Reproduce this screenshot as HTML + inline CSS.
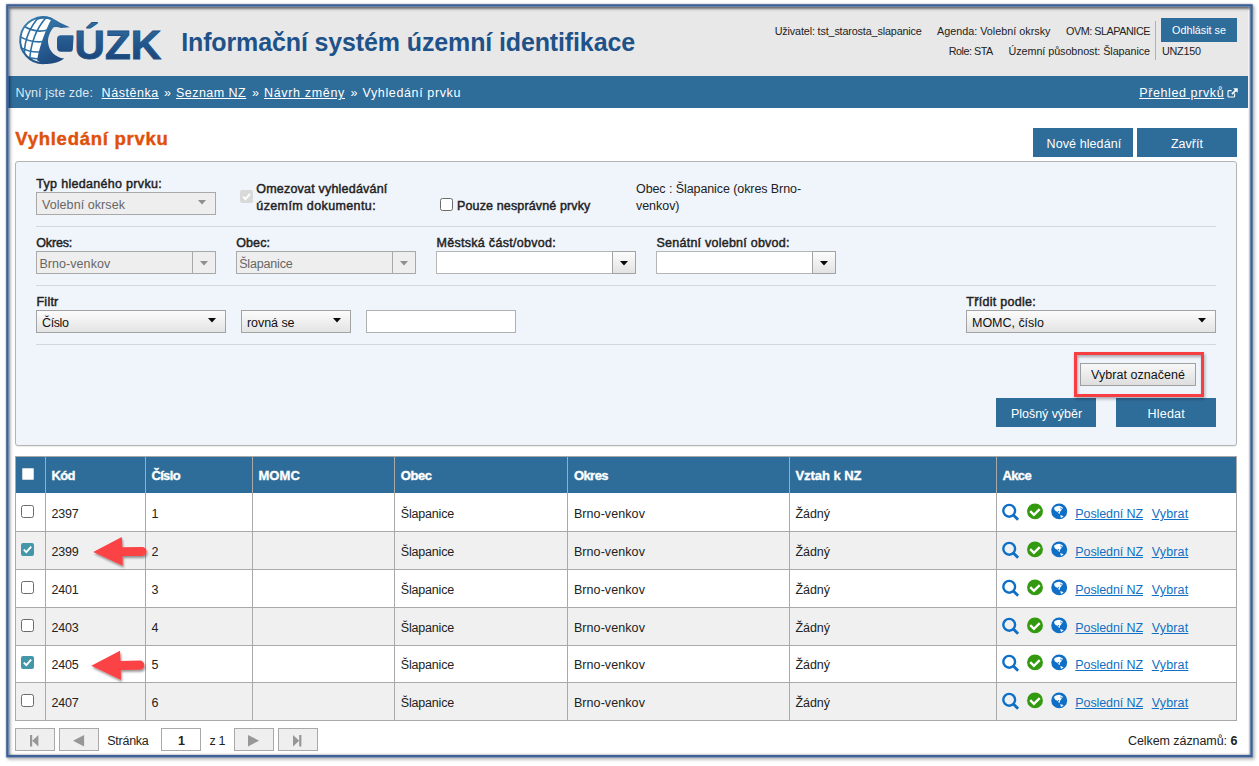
<!DOCTYPE html>
<html lang="cs"><head><meta charset="utf-8"><title>Informační systém územní identifikace – Vyhledání prvku</title>
<style>
html,body{margin:0;padding:0;background:#fff;}
body{width:1259px;height:766px;overflow:hidden;position:relative;font-family:'Liberation Sans', sans-serif;}
#frame{position:absolute;left:0;top:0;z-index:9;pointer-events:none}
#ish{position:absolute;left:8.6px;top:6.6px;width:1241.6px;height:748.6px;box-shadow:inset 0 0 2.5px rgba(0,0,0,.22), inset 0 2px 2px rgba(0,0,0,.28);z-index:8;pointer-events:none}
#c div{position:absolute}
.t{position:absolute;white-space:pre;font-family:'Liberation Sans', sans-serif;}
</style></head>
<body>
<div id="c">
<div style="left:8px;top:6px;width:1240px;height:70px;background:#e8e8e8"></div>
<div style="left:8px;top:76px;width:1240px;height:32px;background:#2e6c99"></div>
<div style="left:1155px;top:21px;width:1px;height:39px;background:#9db5cc"></div>
<div style="left:1161px;top:18px;width:76px;height:24px;background:#2e6c99"></div>
<div style="left:1033px;top:128px;width:100px;height:29px;background:#2e6c99"></div>
<div style="left:1137px;top:128px;width:100px;height:29px;background:#2e6c99"></div>
<div style="left:15px;top:161px;width:1222px;height:285px;background:#f0f4fb;border:1px solid #b4b4b4;border-radius:3px;box-sizing:border-box;box-shadow:0 1px 1px rgba(0,0,0,.08)"></div>
<div style="left:36px;top:226px;width:1180px;height:1px;background:#d4d8de"></div>
<div style="left:36px;top:285px;width:1180px;height:1px;background:#d4d8de"></div>
<div style="left:36px;top:344px;width:1180px;height:1px;background:#d4d8de"></div>
<div style="left:36px;top:192px;width:180px;height:23px;background:#eeeeee;border:1px solid #a9a9a9;box-sizing:border-box"></div>
<svg style="position:absolute;left:198.4px;top:200.3px" width="8" height="5" viewBox="0 0 8 5"><path d="M0 0H8L4.0 4.6Z" fill="#8f8f8f"/></svg>
<div style="left:36px;top:251px;width:157px;height:23px;background:#eeeeee;border:1px solid #a9a9a9;box-sizing:border-box"></div>
<div style="left:192px;top:251px;width:24px;height:23px;background:#eeeeee;border:1px solid #a9a9a9;box-sizing:border-box"></div>
<svg style="position:absolute;left:200.0px;top:261.0px" width="8" height="5" viewBox="0 0 8 5"><path d="M0 0H8L4.0 4.6Z" fill="#8f8f8f"/></svg>
<div style="left:236px;top:251px;width:157px;height:23px;background:#eeeeee;border:1px solid #a9a9a9;box-sizing:border-box"></div>
<div style="left:392px;top:251px;width:24px;height:23px;background:#eeeeee;border:1px solid #a9a9a9;box-sizing:border-box"></div>
<svg style="position:absolute;left:400.0px;top:261.0px" width="8" height="5" viewBox="0 0 8 5"><path d="M0 0H8L4.0 4.6Z" fill="#8f8f8f"/></svg>
<div style="left:436px;top:251px;width:177px;height:23px;background:#fff;border:1px solid #b5b5b5;box-sizing:border-box"></div>
<div style="left:612px;top:251px;width:24px;height:23px;background:linear-gradient(#fcfcfc,#e3e3e3);border:1px solid #a3a3a3;box-sizing:border-box"></div>
<svg style="position:absolute;left:620.0px;top:261.0px" width="8" height="5" viewBox="0 0 8 5"><path d="M0 0H8L4.0 4.6Z" fill="#0a0a0a"/></svg>
<div style="left:656px;top:251px;width:157px;height:23px;background:#fff;border:1px solid #b5b5b5;box-sizing:border-box"></div>
<div style="left:812px;top:251px;width:24px;height:23px;background:linear-gradient(#fcfcfc,#e3e3e3);border:1px solid #a3a3a3;box-sizing:border-box"></div>
<svg style="position:absolute;left:820.0px;top:261.0px" width="8" height="5" viewBox="0 0 8 5"><path d="M0 0H8L4.0 4.6Z" fill="#0a0a0a"/></svg>
<div style="left:36px;top:310px;width:190px;height:23px;background:linear-gradient(#fcfcfc,#e3e3e3);border:1px solid #a3a3a3;box-sizing:border-box"></div>
<svg style="position:absolute;left:208.4px;top:318.3px" width="8" height="5" viewBox="0 0 8 5"><path d="M0 0H8L4.0 4.6Z" fill="#0a0a0a"/></svg>
<div style="left:241px;top:310px;width:110px;height:23px;background:linear-gradient(#fcfcfc,#e3e3e3);border:1px solid #a3a3a3;box-sizing:border-box"></div>
<svg style="position:absolute;left:333.4px;top:318.3px" width="8" height="5" viewBox="0 0 8 5"><path d="M0 0H8L4.0 4.6Z" fill="#0a0a0a"/></svg>
<div style="left:366px;top:310px;width:150px;height:23px;background:#fff;border:1px solid #b0b0b0;box-sizing:border-box"></div>
<div style="left:966px;top:310px;width:250px;height:23px;background:linear-gradient(#fcfcfc,#e3e3e3);border:1px solid #a3a3a3;box-sizing:border-box"></div>
<svg style="position:absolute;left:1198.4px;top:318.3px" width="8" height="5" viewBox="0 0 8 5"><path d="M0 0H8L4.0 4.6Z" fill="#0a0a0a"/></svg>
<div style="left:240px;top:190px;width:13px;height:13px;background:#d9d9d9;border-radius:2px"><svg width="13" height="13" viewBox="0 0 13 13" style="position:absolute;left:0;top:0"><path d="M3 6.7L5.4 9.2L10 3.8" fill="none" stroke="#fff" stroke-width="1.8"/></svg></div>
<div style="left:439.6px;top:198px;width:13px;height:13px;background:#fff;border:1px solid #6b6b6b;border-radius:2.5px;box-sizing:border-box"></div>
<div style="left:1074px;top:352px;width:130px;height:45px;border:3px solid #f73e42;box-sizing:border-box;box-shadow:1px 2px 3px rgba(0,0,0,.3), inset 1px 2px 3px rgba(0,0,0,.3);z-index:3"></div>
<div style="left:1080px;top:363px;width:116px;height:23px;background:linear-gradient(#f8f8f8,#dedede);border:1px solid #a0a0a0;box-sizing:border-box"></div>
<div style="left:996px;top:398px;width:100px;height:29px;background:#2e6c99"></div>
<div style="left:1116px;top:398px;width:100px;height:29px;background:#2e6c99"></div>
<div style="left:15px;top:456px;width:1222px;height:37px;background:#2e6c99"></div>
<div style="left:15px;top:493px;width:1222px;height:39px;background:#fff"></div>
<div style="left:15px;top:532px;width:1222px;height:38px;background:#f0f0f0"></div>
<div style="left:15px;top:570px;width:1222px;height:38px;background:#fff"></div>
<div style="left:15px;top:608px;width:1222px;height:38px;background:#f0f0f0"></div>
<div style="left:15px;top:646px;width:1222px;height:36px;background:#fff"></div>
<div style="left:15px;top:682px;width:1222px;height:38px;background:#f0f0f0"></div>
<svg style="position:absolute;left:0;top:0" width="1259" height="766" viewBox="0 0 1259 766"><rect x="15" y="531.00" width="1222" height="1" fill="#a9a9a9"/><rect x="15" y="569.00" width="1222" height="1" fill="#a9a9a9"/><rect x="15" y="607.00" width="1222" height="1" fill="#a9a9a9"/><rect x="15" y="645.00" width="1222" height="1" fill="#a9a9a9"/><rect x="15" y="682.00" width="1222" height="1" fill="#a9a9a9"/><rect x="15" y="720.00" width="1222" height="1" fill="#a9a9a9"/><rect x="15" y="456" width="1222" height="1" fill="#a9a9a9"/><rect x="15" y="456" width="1" height="265.00" fill="#a9a9a9"/><rect x="1236" y="456" width="1" height="265.00" fill="#a9a9a9"/><rect x="45" y="457" width="1" height="263.00" fill="#a9a9a9"/><rect x="145" y="457" width="1" height="263.00" fill="#a9a9a9"/><rect x="252" y="457" width="1" height="263.00" fill="#a9a9a9"/><rect x="394" y="457" width="1" height="263.00" fill="#a9a9a9"/><rect x="567" y="457" width="1" height="263.00" fill="#a9a9a9"/><rect x="789" y="457" width="1" height="263.00" fill="#a9a9a9"/><rect x="996" y="457" width="1" height="263.00" fill="#a9a9a9"/></svg>
<div style="left:21.5px;top:467.5px;width:12.5px;height:12.5px;background:#fff;border-radius:2px;box-shadow:inset 0 0 0 1px #cfd8e0"></div>
<div style="left:21px;top:505px;width:13px;height:13px;background:#fff;border:1px solid #6b6b6b;border-radius:2.5px;box-sizing:border-box"></div>
<div style="left:21px;top:543px;width:13px;height:13px;background:#4496a9;border-radius:2px"><svg width="13" height="13" viewBox="0 0 13 13" style="position:absolute;left:0;top:0"><path d="M2.8 6.6L5.3 9.2L10.2 3.6" fill="none" stroke="#fff" stroke-width="1.9"/></svg></div>
<div style="left:21px;top:581px;width:13px;height:13px;background:#fff;border:1px solid #6b6b6b;border-radius:2.5px;box-sizing:border-box"></div>
<div style="left:21px;top:619px;width:13px;height:13px;background:#fff;border:1px solid #6b6b6b;border-radius:2.5px;box-sizing:border-box"></div>
<div style="left:21px;top:656px;width:13px;height:13px;background:#4496a9;border-radius:2px"><svg width="13" height="13" viewBox="0 0 13 13" style="position:absolute;left:0;top:0"><path d="M2.8 6.6L5.3 9.2L10.2 3.6" fill="none" stroke="#fff" stroke-width="1.9"/></svg></div>
<div style="left:21px;top:694px;width:13px;height:13px;background:#fff;border:1px solid #6b6b6b;border-radius:2.5px;box-sizing:border-box"></div>
<svg style="position:absolute;left:998px;top:499.95px" width="74" height="24" viewBox="0 0 74 24"><circle cx="11.2" cy="10.8" r="5.9" fill="none" stroke="#0f6fc6" stroke-width="2.4"/><path d="M15.3 14.9L20.1 19.7" stroke="#0f6fc6" stroke-width="2.8"/><circle cx="37" cy="11.4" r="7.9" fill="#33990f"/><path d="M32.2 11.1L35.9 14.8L41.7 9.2" fill="none" stroke="#fff" stroke-width="2.4"/><circle cx="61.2" cy="11.4" r="7.95" fill="#0f6fc6"/><path d="M56.1 7.7L57.9 6.4L61 5.8L63.2 6.6L65.2 8L63.9 8.9L63.3 10.3L61.9 12.1L61.7 13.9L60.6 13.4L59.4 11.7L57.6 11.1L56.4 9.5Z" fill="#fff"/><path d="M62.3 14.9L65.6 16.3L63 18Z" fill="#fff"/><path d="M62.2 7.2L64 8.6L62.8 9.2Z" fill="#0f6fc6"/><circle cx="60.5" cy="11.7" r="0.7" fill="#0f6fc6"/></svg>
<svg style="position:absolute;left:998px;top:537.95px" width="74" height="24" viewBox="0 0 74 24"><circle cx="11.2" cy="10.8" r="5.9" fill="none" stroke="#0f6fc6" stroke-width="2.4"/><path d="M15.3 14.9L20.1 19.7" stroke="#0f6fc6" stroke-width="2.8"/><circle cx="37" cy="11.4" r="7.9" fill="#33990f"/><path d="M32.2 11.1L35.9 14.8L41.7 9.2" fill="none" stroke="#fff" stroke-width="2.4"/><circle cx="61.2" cy="11.4" r="7.95" fill="#0f6fc6"/><path d="M56.1 7.7L57.9 6.4L61 5.8L63.2 6.6L65.2 8L63.9 8.9L63.3 10.3L61.9 12.1L61.7 13.9L60.6 13.4L59.4 11.7L57.6 11.1L56.4 9.5Z" fill="#fff"/><path d="M62.3 14.9L65.6 16.3L63 18Z" fill="#fff"/><path d="M62.2 7.2L64 8.6L62.8 9.2Z" fill="#0f6fc6"/><circle cx="60.5" cy="11.7" r="0.7" fill="#0f6fc6"/></svg>
<svg style="position:absolute;left:998px;top:575.95px" width="74" height="24" viewBox="0 0 74 24"><circle cx="11.2" cy="10.8" r="5.9" fill="none" stroke="#0f6fc6" stroke-width="2.4"/><path d="M15.3 14.9L20.1 19.7" stroke="#0f6fc6" stroke-width="2.8"/><circle cx="37" cy="11.4" r="7.9" fill="#33990f"/><path d="M32.2 11.1L35.9 14.8L41.7 9.2" fill="none" stroke="#fff" stroke-width="2.4"/><circle cx="61.2" cy="11.4" r="7.95" fill="#0f6fc6"/><path d="M56.1 7.7L57.9 6.4L61 5.8L63.2 6.6L65.2 8L63.9 8.9L63.3 10.3L61.9 12.1L61.7 13.9L60.6 13.4L59.4 11.7L57.6 11.1L56.4 9.5Z" fill="#fff"/><path d="M62.3 14.9L65.6 16.3L63 18Z" fill="#fff"/><path d="M62.2 7.2L64 8.6L62.8 9.2Z" fill="#0f6fc6"/><circle cx="60.5" cy="11.7" r="0.7" fill="#0f6fc6"/></svg>
<svg style="position:absolute;left:998px;top:613.95px" width="74" height="24" viewBox="0 0 74 24"><circle cx="11.2" cy="10.8" r="5.9" fill="none" stroke="#0f6fc6" stroke-width="2.4"/><path d="M15.3 14.9L20.1 19.7" stroke="#0f6fc6" stroke-width="2.8"/><circle cx="37" cy="11.4" r="7.9" fill="#33990f"/><path d="M32.2 11.1L35.9 14.8L41.7 9.2" fill="none" stroke="#fff" stroke-width="2.4"/><circle cx="61.2" cy="11.4" r="7.95" fill="#0f6fc6"/><path d="M56.1 7.7L57.9 6.4L61 5.8L63.2 6.6L65.2 8L63.9 8.9L63.3 10.3L61.9 12.1L61.7 13.9L60.6 13.4L59.4 11.7L57.6 11.1L56.4 9.5Z" fill="#fff"/><path d="M62.3 14.9L65.6 16.3L63 18Z" fill="#fff"/><path d="M62.2 7.2L64 8.6L62.8 9.2Z" fill="#0f6fc6"/><circle cx="60.5" cy="11.7" r="0.7" fill="#0f6fc6"/></svg>
<svg style="position:absolute;left:998px;top:650.95px" width="74" height="24" viewBox="0 0 74 24"><circle cx="11.2" cy="10.8" r="5.9" fill="none" stroke="#0f6fc6" stroke-width="2.4"/><path d="M15.3 14.9L20.1 19.7" stroke="#0f6fc6" stroke-width="2.8"/><circle cx="37" cy="11.4" r="7.9" fill="#33990f"/><path d="M32.2 11.1L35.9 14.8L41.7 9.2" fill="none" stroke="#fff" stroke-width="2.4"/><circle cx="61.2" cy="11.4" r="7.95" fill="#0f6fc6"/><path d="M56.1 7.7L57.9 6.4L61 5.8L63.2 6.6L65.2 8L63.9 8.9L63.3 10.3L61.9 12.1L61.7 13.9L60.6 13.4L59.4 11.7L57.6 11.1L56.4 9.5Z" fill="#fff"/><path d="M62.3 14.9L65.6 16.3L63 18Z" fill="#fff"/><path d="M62.2 7.2L64 8.6L62.8 9.2Z" fill="#0f6fc6"/><circle cx="60.5" cy="11.7" r="0.7" fill="#0f6fc6"/></svg>
<svg style="position:absolute;left:998px;top:688.95px" width="74" height="24" viewBox="0 0 74 24"><circle cx="11.2" cy="10.8" r="5.9" fill="none" stroke="#0f6fc6" stroke-width="2.4"/><path d="M15.3 14.9L20.1 19.7" stroke="#0f6fc6" stroke-width="2.8"/><circle cx="37" cy="11.4" r="7.9" fill="#33990f"/><path d="M32.2 11.1L35.9 14.8L41.7 9.2" fill="none" stroke="#fff" stroke-width="2.4"/><circle cx="61.2" cy="11.4" r="7.95" fill="#0f6fc6"/><path d="M56.1 7.7L57.9 6.4L61 5.8L63.2 6.6L65.2 8L63.9 8.9L63.3 10.3L61.9 12.1L61.7 13.9L60.6 13.4L59.4 11.7L57.6 11.1L56.4 9.5Z" fill="#fff"/><path d="M62.3 14.9L65.6 16.3L63 18Z" fill="#fff"/><path d="M62.2 7.2L64 8.6L62.8 9.2Z" fill="#0f6fc6"/><circle cx="60.5" cy="11.7" r="0.7" fill="#0f6fc6"/></svg>
<svg style="position:absolute;left:0;top:0;z-index:5" width="1259" height="766" viewBox="0 0 1259 766"><defs><filter id="sh" x="-20%" y="-20%" width="140%" height="150%"><feDropShadow dx="1" dy="2" stdDeviation="1.2" flood-color="#000" flood-opacity="0.4"/></filter></defs><path d="M93.2 552L121.8 537L122.39999999999999 547.1999999999999L142.1 546.9A4.5 4.5 0 0 1 142.1 555.9L122.6 556.1L122.8 565.7Z" fill="#fb4245" filter="url(#sh)"/><path d="M91.3 665.7L120 650.7L120.6 660.9L139.80000000000004 660.6A4.599999999999966 4.599999999999966 0 0 1 139.80000000000004 669.8L120.8 670.0L121 680Z" fill="#fb4245" filter="url(#sh)"/></svg>
<div style="left:15px;top:728px;width:40px;height:23px;background:#efefef;border:1px solid #a9a9a9;box-sizing:border-box"><svg width="12" height="12" viewBox="0 0 12 12" style="position:absolute;left:14.4px;top:5.7px"><path d="M0 0H2.2V11.4H0ZM8.4 0V11.4L2.2 5.7Z" fill="#979797"/></svg></div>
<div style="left:59px;top:728px;width:40px;height:23px;background:#efefef;border:1px solid #a9a9a9;box-sizing:border-box"><svg width="12" height="12" viewBox="0 0 12 12" style="position:absolute;left:13.0px;top:5.7px"><path d="M11.1 0V11.4L0 5.7Z" fill="#979797"/></svg></div>
<div style="left:234px;top:728px;width:40px;height:23px;background:#efefef;border:1px solid #a9a9a9;box-sizing:border-box"><svg width="12" height="12" viewBox="0 0 12 12" style="position:absolute;left:13.0px;top:5.7px"><path d="M0 0V11.4L11.1 5.7Z" fill="#979797"/></svg></div>
<div style="left:278px;top:728px;width:40px;height:23px;background:#efefef;border:1px solid #a9a9a9;box-sizing:border-box"><svg width="12" height="12" viewBox="0 0 12 12" style="position:absolute;left:14.4px;top:5.7px"><path d="M6.2 0H8.4V11.4H6.2ZM0 0V11.4L6.2 5.7Z" fill="#979797"/></svg></div>
<div style="left:161px;top:728px;width:40px;height:23px;background:#fff;border:1px solid #a9a9a9;box-sizing:border-box"></div>
<svg style="position:absolute;left:1227.4px;top:87.5px" width="11" height="10" viewBox="0 0 11 10"><path d="M7.6 5.6V8.2A0.8 0.8 0 0 1 6.8 9H1.8A0.8 0.8 0 0 1 1 8.2V3.4A0.8 0.8 0 0 1 1.8 2.6H4.6" fill="none" stroke="#fff" stroke-width="1.1"/><path d="M6.2 0.3H10.7V4.8L9.1 3.2L5.6 6.7L4.3 5.4L7.8 1.9Z" fill="#fff"/></svg>
<svg style="position:absolute;left:10px;top:8px" width="160" height="64" viewBox="10 8 160 64">
<defs>
<linearGradient id="lg1" gradientUnits="userSpaceOnUse" x1="30" y1="16" x2="56" y2="64"><stop offset="0" stop-color="#3c82b2"/><stop offset="1" stop-color="#1c477d"/></linearGradient>
<linearGradient id="lg2" gradientUnits="userSpaceOnUse" x1="0" y1="24" x2="0" y2="60"><stop offset="0" stop-color="#2f6da0"/><stop offset="1" stop-color="#1b447a"/></linearGradient>
<clipPath id="gc"><circle cx="42.9" cy="40.1" r="23.2"/></clipPath>
<clipPath id="lit"><path d="M52.6 17C46 29 40.5 45 37.3 61L10 64V8Z"/></clipPath>
</defs>
<g clip-path="url(#gc)"><g clip-path="url(#lit)">
<rect x="10" y="8" width="60" height="64" fill="#fff"/>
<g fill="none" stroke="#2f70a4" stroke-width="1.6">
<path d="M47.5 16C37 27 30 42 29.5 64"/>
<path d="M40 16C29.5 27 23.5 40 24.5 58"/>
<path d="M23 25.5C31 31 42 33 53 28"/>
<path d="M18 35.5C28 41.5 38 43.5 48 40.5"/>
<path d="M18 46C27 51.5 35 53 44 51.5"/>
<path d="M22 55.5C29 58.5 34 59.5 41 58.5"/>
</g></g></g>
<path d="M45.3 63.1A23 23 0 1 1 51.9 18.9" fill="none" stroke="url(#lg1)" stroke-width="2"/>
<path d="M36 17.8Q44 14.6 52.3 18.2L51 20Q44 17.6 37 20Z" fill="#2f70a4"/>
<path d="M52 18.1Q60.5 23.6 69.9 27.3L61 27.9Q57 26.4 53.6 27.2C49.6 32 47.4 38 48.2 43.5C49.2 51 55 57.6 64.3 58.6Q56 64.6 45 63.9Q40 63 37 60.2C40 45 45.5 30 52 18.1Z" fill="url(#lg1)"/>
<path d="M61.2 35.3H72.3Q73.7 35.3 73.6 36.7L72.8 49.4Q72.6 51.7 70.4 51.7H61.2Q57 51.7 57 47.5V39.5Q57 35.3 61.2 35.3Z" fill="url(#lg2)"/>
<text x="74.6" y="59" font-family="'Liberation Sans',sans-serif" font-weight="700" font-size="41.4" fill="url(#lg2)" stroke="#235489" stroke-width="1" textLength="86.5" lengthAdjust="spacingAndGlyphs">ÚZK</text>
</svg>

<span class="t" style="left:181.2px;top:25.5px;font-size:25px;line-height:33px;color:#1f5288;letter-spacing:-0.127px;font-weight:700;">Informační systém územní identifikace</span>
<span class="t" style="left:774.7px;top:24.0px;font-size:10.8px;line-height:14px;color:#222;letter-spacing:-0.151px;">Uživatel: tst_starosta_slapanice</span>
<span class="t" style="left:937.0px;top:24.0px;font-size:10.8px;line-height:14px;color:#222;letter-spacing:0.002px;">Agenda: Volební okrsky</span>
<span class="t" style="left:1066.0px;top:24.0px;font-size:10.8px;line-height:14px;color:#222;letter-spacing:-0.458px;">OVM: SLAPANICE</span>
<span class="t" style="left:948.7px;top:44.0px;font-size:10.8px;line-height:14px;color:#222;letter-spacing:-0.490px;">Role: STA</span>
<span class="t" style="left:1008.5px;top:44.0px;font-size:10.8px;line-height:14px;color:#222;letter-spacing:-0.072px;">Územní působnost: Šlapanice</span>
<span class="t" style="left:1172.0px;top:23.0px;font-size:10.8px;line-height:14px;color:#fff;letter-spacing:-0.001px;">Odhlásit se</span>
<span class="t" style="left:1162.0px;top:44.0px;font-size:10.8px;line-height:14px;color:#222;letter-spacing:-0.236px;">UNZ150</span>
<span class="t" style="left:15.5px;top:85.0px;font-size:12.5px;line-height:16px;color:#dfe8f0;letter-spacing:0.126px;">Nyní jste zde:</span>
<span class="t" style="left:101.6px;top:85.0px;font-size:12.5px;line-height:16px;color:#fff;letter-spacing:0.548px;text-decoration:underline;text-underline-offset:0.6px;">Nástěnka</span>
<span class="t" style="left:164.0px;top:85.0px;font-size:12.5px;line-height:16px;color:#fff;">»</span>
<span class="t" style="left:176.0px;top:85.0px;font-size:12.5px;line-height:16px;color:#fff;letter-spacing:0.467px;text-decoration:underline;text-underline-offset:0.6px;">Seznam NZ</span>
<span class="t" style="left:252.0px;top:85.0px;font-size:12.5px;line-height:16px;color:#fff;">»</span>
<span class="t" style="left:264.0px;top:85.0px;font-size:12.5px;line-height:16px;color:#fff;letter-spacing:0.669px;text-decoration:underline;text-underline-offset:0.6px;">Návrh změny</span>
<span class="t" style="left:350.6px;top:85.0px;font-size:12.5px;line-height:16px;color:#fff;">»</span>
<span class="t" style="left:362.5px;top:85.0px;font-size:12.5px;line-height:16px;color:#fff;letter-spacing:0.621px;">Vyhledání prvku</span>
<span class="t" style="left:1139.2px;top:85.0px;font-size:12.5px;line-height:16px;color:#fff;letter-spacing:0.606px;text-decoration:underline;text-underline-offset:0.6px;">Přehled prvků</span>
<span class="t" style="left:15.3px;top:126.5px;font-size:18.5px;line-height:24px;color:#e0500a;letter-spacing:0.732px;font-weight:700;-webkit-text-stroke:0.4px #e0500a;">Vyhledání prvku</span>
<span class="t" style="left:1046.6px;top:136.0px;font-size:12.5px;line-height:16px;color:#fff;letter-spacing:0.086px;">Nové hledání</span>
<span class="t" style="left:1170.9px;top:136.0px;font-size:12.5px;line-height:16px;color:#fff;letter-spacing:0.008px;">Zavřít</span>
<span class="t" style="left:36.3px;top:176.0px;font-size:12.5px;line-height:16px;color:#222;letter-spacing:0.308px;-webkit-text-stroke:0.45px #222;">Typ hledaného prvku:</span>
<span class="t" style="left:42.0px;top:197.0px;font-size:12.5px;line-height:16px;color:#666;letter-spacing:0.071px;">Volební okrsek</span>
<span class="t" style="left:256.3px;top:181.0px;font-size:12.5px;line-height:16px;color:#222;letter-spacing:0.202px;-webkit-text-stroke:0.45px #222;">Omezovat vyhledávání</span>
<span class="t" style="left:256.3px;top:198.0px;font-size:12.5px;line-height:16px;color:#222;letter-spacing:0.379px;-webkit-text-stroke:0.45px #222;">územím dokumentu:</span>
<span class="t" style="left:457.0px;top:198.0px;font-size:12.5px;line-height:16px;color:#222;letter-spacing:0.136px;-webkit-text-stroke:0.45px #222;">Pouze nesprávné prvky</span>
<span class="t" style="left:636.0px;top:181.0px;font-size:12.5px;line-height:16px;color:#222;letter-spacing:-0.085px;">Obec : Šlapanice (okres Brno-</span>
<span class="t" style="left:636.0px;top:198.0px;font-size:12.5px;line-height:16px;color:#222;letter-spacing:-0.040px;">venkov)</span>
<span class="t" style="left:36.3px;top:235.0px;font-size:12.5px;line-height:16px;color:#222;letter-spacing:-0.185px;-webkit-text-stroke:0.45px #222;">Okres:</span>
<span class="t" style="left:39.4px;top:256.0px;font-size:12.5px;line-height:16px;color:#666;letter-spacing:0.065px;">Brno-venkov</span>
<span class="t" style="left:236.3px;top:235.0px;font-size:12.5px;line-height:16px;color:#222;letter-spacing:0.068px;-webkit-text-stroke:0.45px #222;">Obec:</span>
<span class="t" style="left:239.2px;top:256.0px;font-size:12.5px;line-height:16px;color:#666;letter-spacing:-0.178px;">Šlapanice</span>
<span class="t" style="left:436.5px;top:235.0px;font-size:12.5px;line-height:16px;color:#222;letter-spacing:0.292px;-webkit-text-stroke:0.45px #222;">Městská část/obvod:</span>
<span class="t" style="left:656.5px;top:235.0px;font-size:12.5px;line-height:16px;color:#222;letter-spacing:0.242px;-webkit-text-stroke:0.45px #222;">Senátní volební obvod:</span>
<span class="t" style="left:36.5px;top:294.0px;font-size:12.5px;line-height:16px;color:#222;letter-spacing:0.234px;-webkit-text-stroke:0.45px #222;">Filtr</span>
<span class="t" style="left:42.0px;top:315.0px;font-size:12.5px;line-height:16px;color:#111;letter-spacing:-0.397px;">Číslo</span>
<span class="t" style="left:247.0px;top:315.0px;font-size:12.5px;line-height:16px;color:#111;letter-spacing:-0.057px;">rovná se</span>
<span class="t" style="left:966.3px;top:294.0px;font-size:12.5px;line-height:16px;color:#222;letter-spacing:0.283px;-webkit-text-stroke:0.45px #222;">Třídit podle:</span>
<span class="t" style="left:972.0px;top:315.0px;font-size:12.5px;line-height:16px;color:#111;letter-spacing:-0.021px;">MOMC, číslo</span>
<span class="t" style="left:1091.0px;top:367.0px;font-size:12.5px;line-height:16px;color:#111;letter-spacing:0.043px;">Vybrat označené</span>
<span class="t" style="left:1011.0px;top:406.0px;font-size:12.5px;line-height:16px;color:#fff;letter-spacing:-0.047px;">Plošný výběr</span>
<span class="t" style="left:1147.6px;top:406.0px;font-size:12.5px;line-height:16px;color:#fff;letter-spacing:0.177px;">Hledat</span>
<span class="t" style="left:51.4px;top:467.0px;font-size:13px;line-height:17px;color:#fff;letter-spacing:-0.560px;font-weight:700;-webkit-text-stroke:0.35px #fff;">Kód</span>
<span class="t" style="left:151.4px;top:467.0px;font-size:13px;line-height:17px;color:#fff;letter-spacing:-0.639px;font-weight:700;-webkit-text-stroke:0.35px #fff;">Číslo</span>
<span class="t" style="left:258.4px;top:467.0px;font-size:13px;line-height:17px;color:#fff;letter-spacing:0.107px;font-weight:700;-webkit-text-stroke:0.35px #fff;">MOMC</span>
<span class="t" style="left:400.8px;top:467.0px;font-size:13px;line-height:17px;color:#fff;letter-spacing:-0.454px;font-weight:700;-webkit-text-stroke:0.35px #fff;">Obec</span>
<span class="t" style="left:573.9px;top:467.0px;font-size:13px;line-height:17px;color:#fff;letter-spacing:-0.555px;font-weight:700;-webkit-text-stroke:0.35px #fff;">Okres</span>
<span class="t" style="left:795.4px;top:467.0px;font-size:13px;line-height:17px;color:#fff;letter-spacing:-0.037px;font-weight:700;-webkit-text-stroke:0.35px #fff;">Vztah k NZ</span>
<span class="t" style="left:1002.5px;top:467.0px;font-size:13px;line-height:17px;color:#fff;letter-spacing:-0.645px;font-weight:700;-webkit-text-stroke:0.35px #fff;">Akce</span>
<span class="t" style="left:51.4px;top:506.0px;font-size:12.5px;line-height:16px;color:#222;letter-spacing:-0.178px;">2397</span>
<span class="t" style="left:151.6px;top:506.0px;font-size:12.5px;line-height:16px;color:#222;">1</span>
<span class="t" style="left:400.8px;top:506.0px;font-size:12.5px;line-height:16px;color:#222;letter-spacing:-0.190px;">Šlapanice</span>
<span class="t" style="left:573.9px;top:506.0px;font-size:12.5px;line-height:16px;color:#222;letter-spacing:0.083px;">Brno-venkov</span>
<span class="t" style="left:795.4px;top:506.0px;font-size:12.5px;line-height:16px;color:#222;letter-spacing:-0.030px;">Žádný</span>
<span class="t" style="left:1075.3px;top:506.0px;font-size:12.5px;line-height:16px;color:#1070c4;letter-spacing:-0.098px;text-decoration:underline;text-underline-offset:0.6px;">Poslední NZ</span>
<span class="t" style="left:1151.7px;top:506.0px;font-size:12.5px;line-height:16px;color:#1070c4;letter-spacing:0.171px;text-decoration:underline;text-underline-offset:0.6px;">Vybrat</span>
<span class="t" style="left:51.4px;top:544.0px;font-size:12.5px;line-height:16px;color:#222;letter-spacing:-0.178px;">2399</span>
<span class="t" style="left:151.6px;top:544.0px;font-size:12.5px;line-height:16px;color:#222;">2</span>
<span class="t" style="left:400.8px;top:544.0px;font-size:12.5px;line-height:16px;color:#222;letter-spacing:-0.190px;">Šlapanice</span>
<span class="t" style="left:573.9px;top:544.0px;font-size:12.5px;line-height:16px;color:#222;letter-spacing:0.083px;">Brno-venkov</span>
<span class="t" style="left:795.4px;top:544.0px;font-size:12.5px;line-height:16px;color:#222;letter-spacing:-0.030px;">Žádný</span>
<span class="t" style="left:1075.3px;top:544.0px;font-size:12.5px;line-height:16px;color:#1070c4;letter-spacing:-0.098px;text-decoration:underline;text-underline-offset:0.6px;">Poslední NZ</span>
<span class="t" style="left:1151.7px;top:544.0px;font-size:12.5px;line-height:16px;color:#1070c4;letter-spacing:0.171px;text-decoration:underline;text-underline-offset:0.6px;">Vybrat</span>
<span class="t" style="left:51.4px;top:582.0px;font-size:12.5px;line-height:16px;color:#222;letter-spacing:-0.178px;">2401</span>
<span class="t" style="left:151.6px;top:582.0px;font-size:12.5px;line-height:16px;color:#222;">3</span>
<span class="t" style="left:400.8px;top:582.0px;font-size:12.5px;line-height:16px;color:#222;letter-spacing:-0.190px;">Šlapanice</span>
<span class="t" style="left:573.9px;top:582.0px;font-size:12.5px;line-height:16px;color:#222;letter-spacing:0.083px;">Brno-venkov</span>
<span class="t" style="left:795.4px;top:582.0px;font-size:12.5px;line-height:16px;color:#222;letter-spacing:-0.030px;">Žádný</span>
<span class="t" style="left:1075.3px;top:582.0px;font-size:12.5px;line-height:16px;color:#1070c4;letter-spacing:-0.098px;text-decoration:underline;text-underline-offset:0.6px;">Poslední NZ</span>
<span class="t" style="left:1151.7px;top:582.0px;font-size:12.5px;line-height:16px;color:#1070c4;letter-spacing:0.171px;text-decoration:underline;text-underline-offset:0.6px;">Vybrat</span>
<span class="t" style="left:51.4px;top:620.0px;font-size:12.5px;line-height:16px;color:#222;letter-spacing:-0.178px;">2403</span>
<span class="t" style="left:151.6px;top:620.0px;font-size:12.5px;line-height:16px;color:#222;">4</span>
<span class="t" style="left:400.8px;top:620.0px;font-size:12.5px;line-height:16px;color:#222;letter-spacing:-0.190px;">Šlapanice</span>
<span class="t" style="left:573.9px;top:620.0px;font-size:12.5px;line-height:16px;color:#222;letter-spacing:0.083px;">Brno-venkov</span>
<span class="t" style="left:795.4px;top:620.0px;font-size:12.5px;line-height:16px;color:#222;letter-spacing:-0.030px;">Žádný</span>
<span class="t" style="left:1075.3px;top:620.0px;font-size:12.5px;line-height:16px;color:#1070c4;letter-spacing:-0.098px;text-decoration:underline;text-underline-offset:0.6px;">Poslední NZ</span>
<span class="t" style="left:1151.7px;top:620.0px;font-size:12.5px;line-height:16px;color:#1070c4;letter-spacing:0.171px;text-decoration:underline;text-underline-offset:0.6px;">Vybrat</span>
<span class="t" style="left:51.4px;top:657.0px;font-size:12.5px;line-height:16px;color:#222;letter-spacing:-0.178px;">2405</span>
<span class="t" style="left:151.6px;top:657.0px;font-size:12.5px;line-height:16px;color:#222;">5</span>
<span class="t" style="left:400.8px;top:657.0px;font-size:12.5px;line-height:16px;color:#222;letter-spacing:-0.190px;">Šlapanice</span>
<span class="t" style="left:573.9px;top:657.0px;font-size:12.5px;line-height:16px;color:#222;letter-spacing:0.083px;">Brno-venkov</span>
<span class="t" style="left:795.4px;top:657.0px;font-size:12.5px;line-height:16px;color:#222;letter-spacing:-0.030px;">Žádný</span>
<span class="t" style="left:1075.3px;top:657.0px;font-size:12.5px;line-height:16px;color:#1070c4;letter-spacing:-0.098px;text-decoration:underline;text-underline-offset:0.6px;">Poslední NZ</span>
<span class="t" style="left:1151.7px;top:657.0px;font-size:12.5px;line-height:16px;color:#1070c4;letter-spacing:0.171px;text-decoration:underline;text-underline-offset:0.6px;">Vybrat</span>
<span class="t" style="left:51.4px;top:695.0px;font-size:12.5px;line-height:16px;color:#222;letter-spacing:-0.178px;">2407</span>
<span class="t" style="left:151.6px;top:695.0px;font-size:12.5px;line-height:16px;color:#222;">6</span>
<span class="t" style="left:400.8px;top:695.0px;font-size:12.5px;line-height:16px;color:#222;letter-spacing:-0.190px;">Šlapanice</span>
<span class="t" style="left:573.9px;top:695.0px;font-size:12.5px;line-height:16px;color:#222;letter-spacing:0.083px;">Brno-venkov</span>
<span class="t" style="left:795.4px;top:695.0px;font-size:12.5px;line-height:16px;color:#222;letter-spacing:-0.030px;">Žádný</span>
<span class="t" style="left:1075.3px;top:695.0px;font-size:12.5px;line-height:16px;color:#1070c4;letter-spacing:-0.098px;text-decoration:underline;text-underline-offset:0.6px;">Poslední NZ</span>
<span class="t" style="left:1151.7px;top:695.0px;font-size:12.5px;line-height:16px;color:#1070c4;letter-spacing:0.171px;text-decoration:underline;text-underline-offset:0.6px;">Vybrat</span>
<span class="t" style="left:107.3px;top:733.0px;font-size:12.5px;line-height:16px;color:#222;letter-spacing:-0.271px;">Stránka</span>
<span class="t" style="left:177.9px;top:733.0px;font-size:12.5px;line-height:16px;color:#222;font-weight:700;">1</span>
<span class="t" style="left:209.4px;top:733.0px;font-size:12.5px;line-height:16px;color:#222;letter-spacing:-0.363px;">z 1</span>
<span class="t" style="left:1128.0px;top:733.0px;font-size:12.5px;line-height:16px;color:#222;letter-spacing:-0.070px;">Celkem záznamů:</span>
<span class="t" style="left:1230.5px;top:733.0px;font-size:12.5px;line-height:16px;color:#222;font-weight:700;">6</span>
</div>
<div id="ish"></div>
<svg id="frame" width="1259" height="766" viewBox="0 0 1259 766"><defs><filter id="fsh" x="-2%" y="-2%" width="104%" height="104%"><feDropShadow dx="0" dy="0" stdDeviation="1.3" flood-color="#000" flood-opacity="0.3"/><feDropShadow dx="1.7" dy="2" stdDeviation="1.4" flood-color="#000" flood-opacity="0.3"/></filter></defs><rect x="7.4" y="5.4" width="1244.1" height="750.8" fill="none" stroke="#3d6098" stroke-width="2.4" filter="url(#fsh)"/></svg>
</body></html>
